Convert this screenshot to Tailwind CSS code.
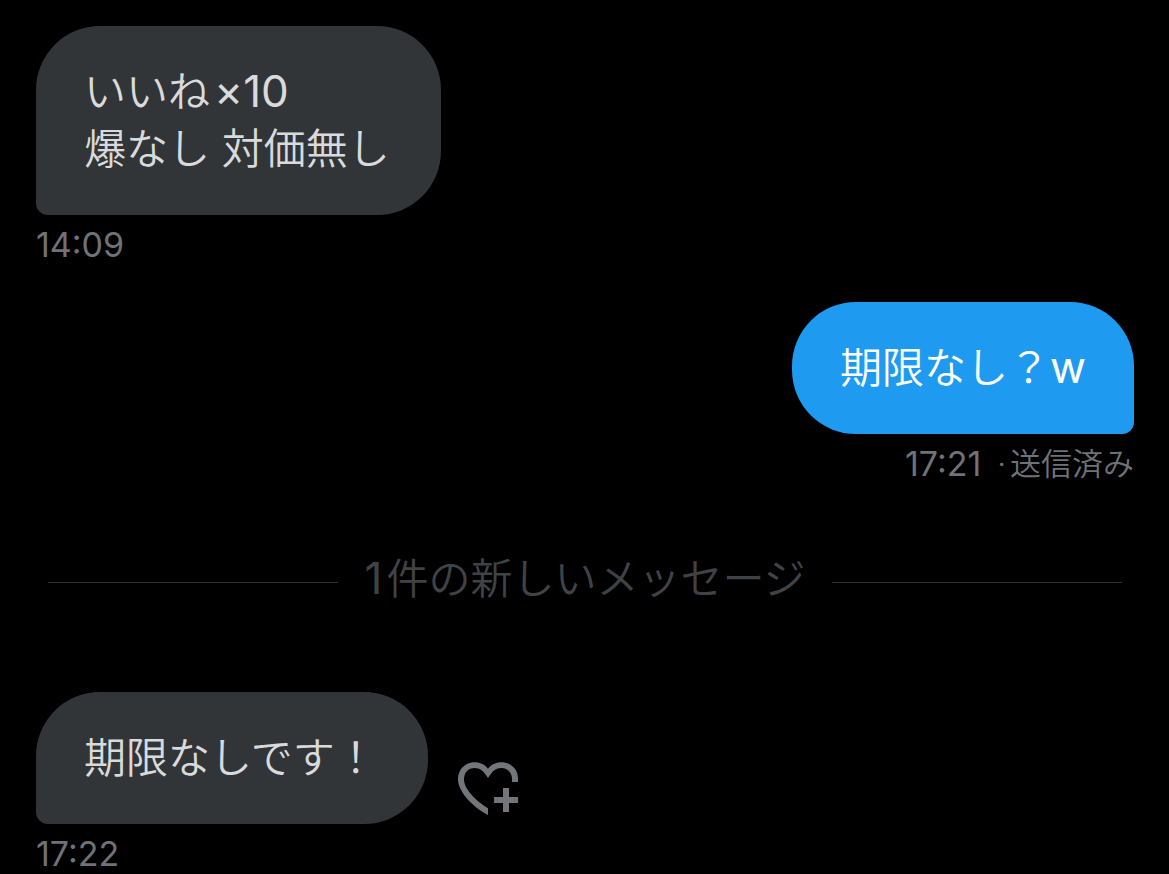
<!DOCTYPE html>
<html lang="ja">
<head>
  <meta charset="UTF-8" />
  <title>メッセージ</title>
  <script src="https://cdn.jsdelivr.net/npm/@tailwindcss/browser@4"></script>
  <meta name="viewport" content="width=device-width, initial-scale=1.0" />
</head>
<body class="bg-black font-['Inter','Noto_Sans_CJK_JP',sans-serif] font-[350]">

  <main class="pl-9 pr-[35px] pt-[26px]">

    <div class="flex flex-col items-start">
      <p class="bg-[#323537] text-[#d9dadb] text-[42px] leading-[57px] pt-[37px] pb-[38px] pl-12 pr-[51px] rounded-[64px] rounded-bl-xl">いいね<span class="ml-1 text-[44px] font-normal [font-feature-settings:'calt'_0]">×10</span><br />爆なし 対価無し</p>
      <time class="mt-3 text-[34px] leading-9 font-normal text-[#6f7276]">14:09</time>
    </div>

    <div class="mt-[39px] flex flex-col items-end">
      <p class="bg-[#1e9bf0] text-white text-[42px] leading-[57px] pt-[37px] pb-[38px] px-12 rounded-[64px] rounded-br-xl">期限なし？<span class="text-[44px] font-normal">w</span></p>
      <p class="mt-3 flex items-center text-[34px] leading-9 text-[#6f7276]"><time class="mr-4 font-normal">17:21</time><span class="mr-1 text-[31px]">·</span><span class="text-[31px]">送信済み</span></p>
    </div>

    <div class="mt-[68px] mb-[77px] mx-3 flex items-center gap-[26px]">
      <div class="flex-1 h-px bg-[#2f3234]"></div>
      <h2 class="text-[42px] leading-[57px] pb-2 text-[#404346]"><span class="mr-1 text-[44px] font-normal">1</span>件の新しいメッセージ</h2>
      <div class="flex-1 h-px bg-[#2f3234]"></div>
    </div>

    <div class="flex flex-col items-start">
      <div class="flex items-end gap-[30px]">
        <p class="bg-[#323537] text-[#d9dadb] text-[42px] leading-[57px] pt-[37px] pb-[38px] pl-12 pr-[51px] rounded-[64px] rounded-bl-xl">期限なしです！</p>
        <button type="button" aria-label="リアクションを追加" class="mb-2 text-[#72767a]">
          <svg class="block w-[60px] h-[54px]" viewBox="42 36 180 162" fill="currentColor">
            <path d="M132 195C100 180 42 132 42 88C42 58 64 37 92 37C108 37 123 44 132 56C141 44 156 37 172 37C200 37 222 58 222 86V96H204V86C204 68 191 54 172 54C156 54 146 64 140 73L132 84L124 73C118 64 108 54 92 54C73 54 60 68 60 88C60 118 95 152 132 175Z" />
            <path d="M177 114H195V141H222V159H195V186H177V159H150V141H177Z" />
          </svg>
        </button>
      </div>
      <time class="mt-3 text-[34px] leading-9 font-normal text-[#6f7276]">17:22</time>
    </div>

  </main>

</body>
</html>
